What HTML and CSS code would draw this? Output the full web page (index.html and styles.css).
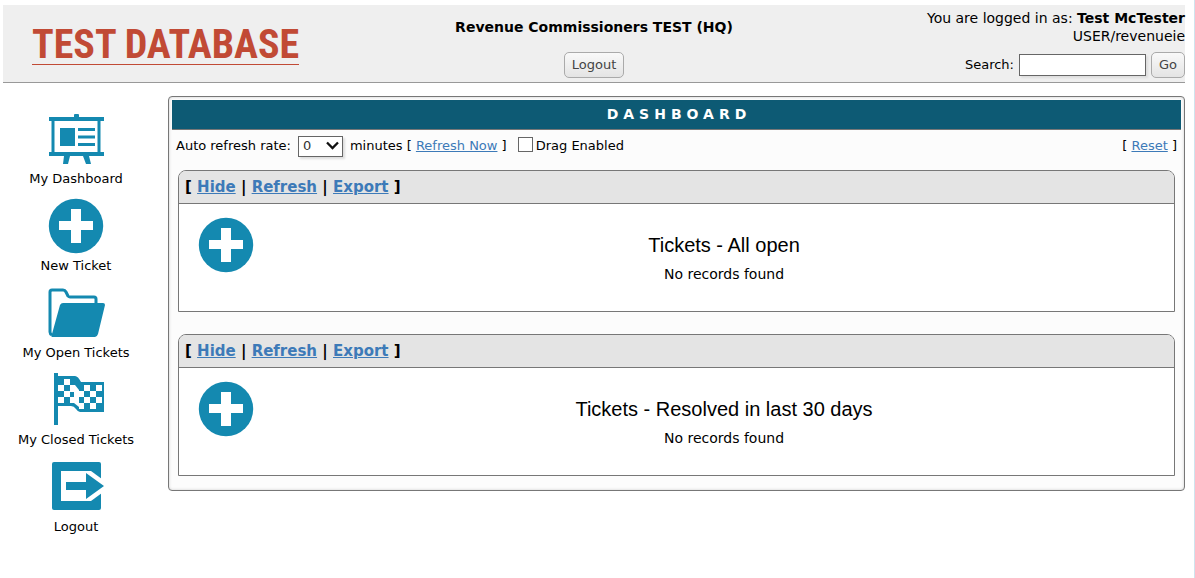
FILE: index.html
```html
<!DOCTYPE html>
<html lang="en">
<head>
<meta charset="utf-8">
<title>Dashboard</title>
<link rel="stylesheet" href="styles.css">
</head>
<body>
<svg class="defs" aria-hidden="true">
  <symbol id="icon-plus" viewBox="0 0 56 56">
    <circle cx="28" cy="28" r="27.2" fill="#1489b0"/>
    <path d="M23 11h10v12h12v9H33v13H23V32H11v-9h12z" fill="#fff"/>
  </symbol>
</svg>

<header class="header">
  <div class="brand">TEST DATABASE</div>
  <div class="account">
    <h1 class="org">Revenue Commissioners TEST (HQ)</h1>
    <button class="button" type="button">Logout</button>
  </div>
  <div class="session">
    <div class="user">You are logged in as: <b>Test McTester</b></div>
    <div class="user">USER/revenueie</div>
    <form class="search">
      <label for="search">Search:</label>
      <input class="search-input" id="search" type="text">
      <button class="button button-go" type="button">Go</button>
    </form>
  </div>
</header>

<div class="layout">
  <nav class="sidebar">
    <a class="nav-item" href="#">
      <svg class="nav-icon" viewBox="0 0 60 56" fill="#1489b0">
        <path d="M28 6v-2q0-1 1-1h3q1 0 1 1v2h25v4H3V6z"/>
        <path d="M5.500 9h3v32h-3zM51.500 9h3v32h-3zM3 41h55v4H3z"/>
        <path d="M18 45h6l-2 8h-5zM37 45h6l2 8h-5z"/>
        <path d="M14 17h15v18H14zM32 17h17v3H32zM32 24.500h17v3H32zM32 32h17v3H32z"/>
      </svg>
      <span>My Dashboard</span>
    </a>
    <a class="nav-item" href="#">
      <svg class="nav-icon nav-icon-round"><use href="#icon-plus"/></svg>
      <span>New Ticket</span>
    </a>
    <a class="nav-item" href="#">
      <svg class="nav-icon" viewBox="0 0 60 56">
        <path d="M6 50q-2-1-2-3V7q0-2 2-2h11q2 0 3 2l2 4q1 1 2 1h24q2 0 2 2v6" fill="none" stroke="#1489b0" stroke-width="3"/>
        <path d="M14 20q1-2 3-2h40q2 0 2 2l-7 29q-1 3-3 3H6q-1 0 0-3z" fill="#1489b0"/>
      </svg>
      <span>My Open Tickets</span>
    </a>
    <a class="nav-item" href="#">
      <svg class="nav-icon" viewBox="0 0 60 56">
        <path d="M8 1h4v3h17q3 0 6 6h23v30H34q-2 0-4-3-2-3-5-3H12v19H8z" fill="#1489b0"/>
        <path d="M18 7h6v6h-6zM12 13h6v6h-6zM24 13h5l4 5v6l-5-4h-4zM18 19h6v6h-6zM12 25h6v6h-6zM24 25h4l5 5v5l-5-4h-4zM28 20l5 4v6l-5-4zM38 13h6v6h-6zM50 13h6v6h-6zM33 19h5v6h-5zM44 19h6v6h-6zM38 25h6v6h-6zM50 25h6v6h-6zM33 31h5v6h-5zM44 31h6v6h-6z" fill="#fff"/>
      </svg>
      <span>My Closed Tickets</span>
    </a>
    <a class="nav-item" href="#">
      <svg class="nav-icon" viewBox="0 0 60 56">
        <rect x="6" y="3" width="49" height="48" rx="2" fill="#1489b0"/>
        <path d="M15 12h30l15 11v8L45 42H15z" fill="#fff"/>
        <path d="M20 23h20v-9l18 13-18 13v-9H20z" fill="#1489b0"/>
      </svg>
      <span>Logout</span>
    </a>
  </nav>

  <main class="dashboard">
    <h2 class="dashboard-title">DASHBOARD</h2>
    <div class="toolbar">
      <div class="toolbar-group">
        <label for="rate">Auto refresh rate:</label>
        <span class="select-wrap">
          <select class="rate" id="rate"><option>0</option></select>
          <svg class="chevron" viewBox="0 0 13 9"><path d="M1 1.500l5.500 5.500L12 1.500" fill="none" stroke="#111" stroke-width="2.300"/></svg>
        </span>
        <span>minutes [ <a class="link" href="#">Refresh Now</a> ]</span>
        <span class="drag"><input class="drag-box" id="drag" type="checkbox"><label for="drag">Drag Enabled</label></span>
      </div>
      <span>[ <a class="link" href="#">Reset</a> ]</span>
    </div>
    <div class="panels">
      <section class="panel">
        <div class="panel-bar">[ <a class="link" href="#">Hide</a> | <a class="link" href="#">Refresh</a> | <a class="link" href="#">Export</a> ]</div>
        <div class="panel-body">
          <a href="#" aria-label="New ticket"><svg class="plus"><use href="#icon-plus"/></svg></a>
          <div class="panel-text">
            <h3 class="panel-title">Tickets - All open</h3>
            <p class="panel-note">No records found</p>
          </div>
        </div>
      </section>
      <section class="panel">
        <div class="panel-bar">[ <a class="link" href="#">Hide</a> | <a class="link" href="#">Refresh</a> | <a class="link" href="#">Export</a> ]</div>
        <div class="panel-body">
          <a href="#" aria-label="New ticket"><svg class="plus"><use href="#icon-plus"/></svg></a>
          <div class="panel-text">
            <h3 class="panel-title">Tickets - Resolved in last 30 days</h3>
            <p class="panel-note">No records found</p>
          </div>
        </div>
      </section>
    </div>
  </main>
</div>
</body>
</html>
```
FILE: styles.css
```css
* { box-sizing: border-box; }

body {
  margin: 0;
  min-height: 100vh;
  padding: 5px 9px 0 3px;
  border-right: 1px solid #cfe4ee;
  background: #fff;
  color: #000;
  font: 13px/18px Verdana, "DejaVu Sans", sans-serif;
}

h1, h2, h3, p { margin: 0; }

svg { display: block; }

.defs { position: absolute; width: 0; height: 0; }

.link { color: #3d7ab8; text-decoration: underline; }

.header {
  display: grid;
  grid-template-columns: 1fr auto 1fr;
  min-height: 78px;
  background: #efefef;
  border-bottom: 1px solid #999;
}

.brand {
  justify-self: start;
  align-self: start;
  margin: 20px 0 0 29px;
  border-bottom: 1px solid #c14a35;
  color: #c14a35;
  font: bold 40px/39px "Roboto Condensed", "Open Sans Condensed", "Noto Sans CJK SC", sans-serif;
}

.account {
  display: flex;
  flex-direction: column;
  align-items: center;
  gap: 16px;
  padding-top: 13px;
}

.org { font-size: 14px; line-height: 18px; }

.button {
  height: 26px;
  padding: 0 7px;
  border: 1px solid #aaa;
  border-radius: 5px;
  background: linear-gradient(#f9f9f9, #e4e4e4);
  color: #444;
  font: inherit;
}

.session { padding-top: 4px; text-align: right; }

.user { font-size: 14px; }

.search {
  display: flex;
  justify-content: flex-end;
  align-items: center;
  gap: 5px;
  margin-top: 7px;
}

.search-input {
  width: 127px;
  height: 22px;
  border: 1px solid #666;
  background: #fff;
  box-shadow: 2px 2px 2px #ddd;
  font: inherit;
}

.layout {
  display: grid;
  grid-template-columns: 146px 1fr;
  column-gap: 19px;
  align-items: start;
  padding-top: 13px;
}

.sidebar {
  display: flex;
  flex-direction: column;
  gap: 8px;
  padding-top: 15px;
}

.nav-item {
  display: flex;
  flex-direction: column;
  align-items: center;
  color: #000;
  line-height: 23px;
  text-decoration: none;
}

.nav-icon { width: 60px; height: 56px; }

.nav-icon-round { width: 56px; }

.dashboard {
  padding: 3px 3px 14px;
  border: 1px solid #777;
  border-radius: 4px;
  background: #fcfcfc;
  box-shadow: inset 0 0 3px #ccc;
}

.dashboard-title {
  padding-left: 5px;
  border-bottom: 1px solid #777;
  background: #0d5a74;
  color: #fff;
  font-size: 14px;
  line-height: 29px;
  letter-spacing: 5px;
  text-align: center;
}

.toolbar {
  display: flex;
  justify-content: space-between;
  align-items: center;
  height: 32px;
  padding: 0 4px;
}

.toolbar-group { display: flex; align-items: center; gap: 7px; }

.select-wrap { position: relative; }

.rate {
  display: block;
  width: 45px;
  height: 21px;
  padding: 0 4px;
  border: 1px solid #666;
  background: #fff;
  box-shadow: 2px 2px 2px #ddd;
  color: #333;
  appearance: none;
  font: inherit;
}

.chevron {
  position: absolute;
  top: 5px;
  right: 4px;
  width: 13px;
  height: 9px;
  pointer-events: none;
}

.drag { display: flex; align-items: center; gap: 3px; padding-left: 4px; }

.drag-box {
  width: 15px;
  height: 15px;
  margin: 0 0 4px;
  border: 1px solid #666;
  background: #fff;
  appearance: none;
}

.panels {
  display: flex;
  flex-direction: column;
  gap: 22px;
  padding: 8px 6px 0;
}

.panel {
  border: 1px solid #777;
  border-radius: 8px 8px 0 0;
  background: #fff;
}

.panel-bar {
  border-bottom: 1px solid #777;
  border-radius: 7px 7px 0 0;
  background: #e4e4e4;
  padding: 0 6px;
  font-size: 15px;
  font-weight: bold;
  line-height: 32px;
}

.panel-body {
  display: grid;
  grid-template-columns: 76px 1fr;
  min-height: 107px;
  padding: 13px 0 0 19px;
}

.plus { width: 56px; height: 56px; }

.panel-text { padding-top: 16px; text-align: center; }

.panel-title {
  font: 20px/24px "Liberation Sans", Arial, sans-serif;
}

.panel-note { padding-top: 8px; font-size: 14px; }
```
